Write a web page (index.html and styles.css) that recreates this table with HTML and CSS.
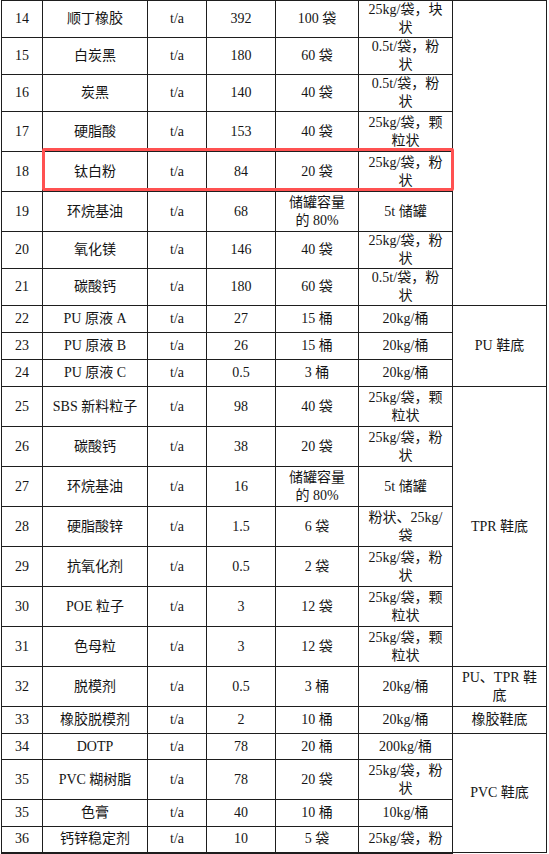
FILE: index.html
```html
<!DOCTYPE html>
<html lang="zh-CN">
<head>
<meta charset="utf-8">
<title>原辅材料表</title>
<link rel="stylesheet" href="styles.css">
</head>
<body>
<div class="sheet">
<table class="materials">
<colgroup>
<col class="c-no"><col class="c-name"><col class="c-unit"><col class="c-qty"><col class="c-store"><col class="c-spec"><col class="c-use">
</colgroup>
<tbody>
<tr class="h37"><td>14</td><td>顺丁橡胶</td><td>t/a</td><td>392</td><td>100 袋</td><td>25kg/袋，块<br>状</td><td rowspan="8"></td></tr>
<tr class="h37"><td>15</td><td>白炭黑</td><td>t/a</td><td>180</td><td>60 袋</td><td>0.5t/袋，粉<br>状</td></tr>
<tr class="h37"><td>16</td><td>炭黑</td><td>t/a</td><td>140</td><td>40 袋</td><td>0.5t/袋，粉<br>状</td></tr>
<tr class="h40"><td>17</td><td>硬脂酸</td><td>t/a</td><td>153</td><td>40 袋</td><td>25kg/袋，颗<br>粒状</td></tr>
<tr class="h40"><td>18</td><td>钛白粉</td><td>t/a</td><td>84</td><td>20 袋</td><td>25kg/袋，粉<br>状</td></tr>
<tr class="h40"><td>19</td><td>环烷基油</td><td>t/a</td><td>68</td><td>储罐容量<br>的 80%</td><td>5t 储罐</td></tr>
<tr class="h37"><td>20</td><td>氧化镁</td><td>t/a</td><td>146</td><td>40 袋</td><td>25kg/袋，粉<br>状</td></tr>
<tr class="h37"><td>21</td><td>碳酸钙</td><td>t/a</td><td>180</td><td>60 袋</td><td>0.5t/袋，粉<br>状</td></tr>
<tr class="h27"><td>22</td><td>PU 原液 A</td><td>t/a</td><td>27</td><td>15 桶</td><td>20kg/桶</td><td rowspan="3">PU 鞋底</td></tr>
<tr class="h27"><td>23</td><td>PU 原液 B</td><td>t/a</td><td>26</td><td>15 桶</td><td>20kg/桶</td></tr>
<tr class="h27"><td>24</td><td>PU 原液 C</td><td>t/a</td><td>0.5</td><td>3 桶</td><td>20kg/桶</td></tr>
<tr class="h40"><td>25</td><td>SBS 新料粒子</td><td>t/a</td><td>98</td><td>40 袋</td><td>25kg/袋，颗<br>粒状</td><td rowspan="7">TPR 鞋底</td></tr>
<tr class="h40"><td>26</td><td>碳酸钙</td><td>t/a</td><td>38</td><td>20 袋</td><td>25kg/袋，粉<br>状</td></tr>
<tr class="h40"><td>27</td><td>环烷基油</td><td>t/a</td><td>16</td><td>储罐容量<br>的 80%</td><td>5t 储罐</td></tr>
<tr class="h40"><td>28</td><td>硬脂酸锌</td><td>t/a</td><td>1.5</td><td>6 袋</td><td>粉状、25kg/<br>袋</td></tr>
<tr class="h40"><td>29</td><td>抗氧化剂</td><td>t/a</td><td>0.5</td><td>2 袋</td><td>25kg/袋，粉<br>状</td></tr>
<tr class="h40"><td>30</td><td>POE 粒子</td><td>t/a</td><td>3</td><td>12 袋</td><td>25kg/袋，颗<br>粒状</td></tr>
<tr class="h40"><td>31</td><td>色母粒</td><td>t/a</td><td>3</td><td>12 袋</td><td>25kg/袋，颗<br>粒状</td></tr>
<tr class="h40"><td>32</td><td>脱模剂</td><td>t/a</td><td>0.5</td><td>3 桶</td><td>20kg/桶</td><td>PU、TPR 鞋<br>底</td></tr>
<tr class="h27"><td>33</td><td>橡胶脱模剂</td><td>t/a</td><td>2</td><td>10 桶</td><td>20kg/桶</td><td>橡胶鞋底</td></tr>
<tr class="h26"><td>34</td><td>DOTP</td><td>t/a</td><td>78</td><td>20 桶</td><td>200kg/桶</td><td rowspan="4">PVC 鞋底</td></tr>
<tr class="h40"><td>35</td><td>PVC 糊树脂</td><td>t/a</td><td>78</td><td>20 袋</td><td>25kg/袋，粉<br>状</td></tr>
<tr class="h27"><td>35</td><td>色膏</td><td>t/a</td><td>40</td><td>10 桶</td><td>10kg/桶</td></tr>
<tr class="h26 last"><td>36</td><td>钙锌稳定剂</td><td>t/a</td><td>10</td><td>5 袋</td><td>25kg/袋，粉</td></tr>
</tbody>
</table>
<div class="highlight"></div>
</div>
</body>
</html>
```

FILE: styles.css
```css
html, body {
  margin: 0;
  padding: 0;
  background: #fff;
}

.sheet {
  position: relative;
  width: 549px;
  height: 854px;
  overflow: hidden;
}

.materials {
  border-collapse: collapse;
  table-layout: fixed;
  width: 546px;
  margin-left: 1px;
  font-family: "Liberation Serif", "Noto Sans CJK SC", serif;
  font-size: 14px;
  line-height: 18px;
  color: #151515;
}

.c-no { width: 41px; }
.c-name { width: 105px; }
.c-unit { width: 59px; }
.c-qty { width: 69px; }
.c-store { width: 83px; }
.c-spec { width: 94px; }
.c-use { width: 94px; }

.materials td {
  border: 1px solid #1e1e1e;
  padding: 0 4px;
  text-align: center;
  vertical-align: middle;
  white-space: nowrap;
  overflow: hidden;
}

.h26 { height: 26px; }
.h27 { height: 27px; }
.h37 { height: 37px; }
.h40 { height: 40px; }

.last td {
  border-bottom-width: 2px;
}

.highlight {
  position: absolute;
  left: 42px;
  top: 148px;
  width: 412px;
  height: 43px;
  box-sizing: border-box;
  border: 3px solid #ff5151;
  border-radius: 2px;
}
```
